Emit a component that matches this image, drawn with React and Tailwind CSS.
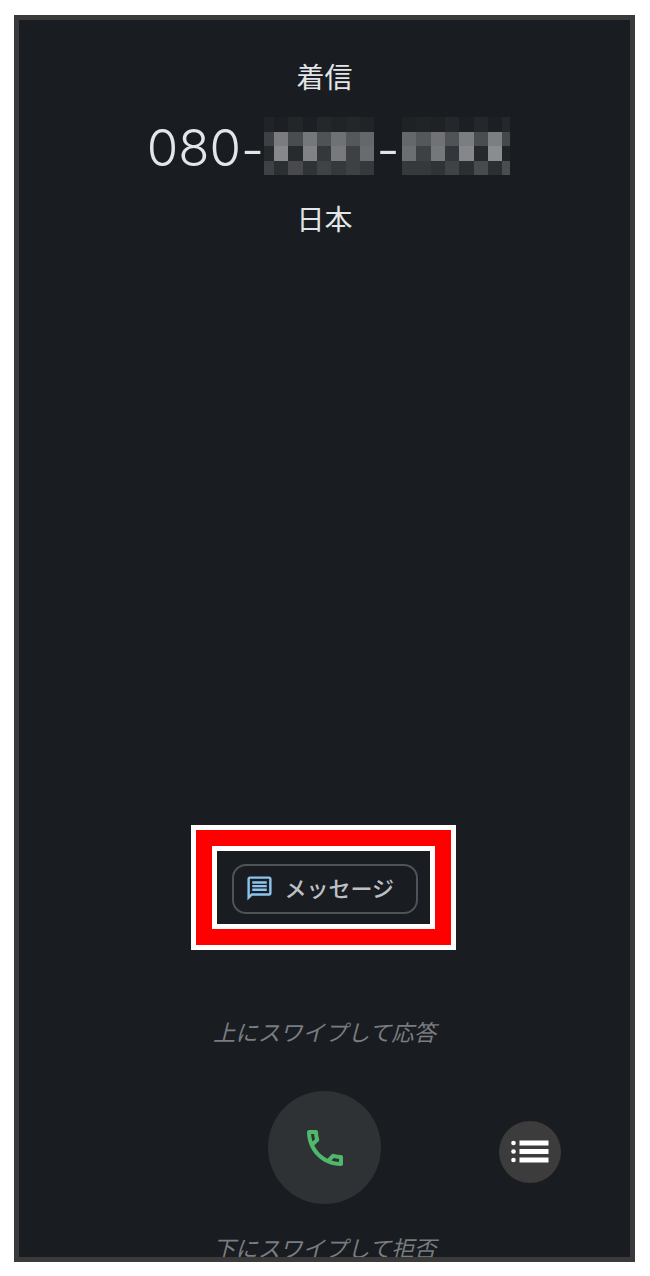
import React from 'react';

const jp = 'font-["Noto_Sans_CJK_JP",sans-serif]';

// mosaic over the masked digits, one row per line
const blockA = [
    ['bg-[#202327]', 'bg-[#1c1f23]', 'bg-[#232629]', 'bg-[#1c1f23]', 'bg-[#25282b]', 'bg-[#212427]', 'bg-[#24272a]', 'bg-[#212427]'],
    ['bg-[#3e4144]', 'bg-[#7a7c7f]', 'bg-[#4a4d50]', 'bg-[#75787b]', 'bg-[#505356]', 'bg-[#6f7275]', 'bg-[#55585b]', 'bg-[#65686b]'],
    ['bg-[#26292c]', 'bg-[#86888b]', 'bg-[#282b2e]', 'bg-[#808285]', 'bg-[#35383b]', 'bg-[#77797c]', 'bg-[#3e4144]', 'bg-[#696c6f]'],
    ['bg-[#3f4245]', 'bg-[#2c2f32]', 'bg-[#47494c]', 'bg-[#303336]', 'bg-[#404346]', 'bg-[#36393c]', 'bg-[#3e4144]', 'bg-[#36393c]'],
];

const blockB = [
    ['bg-[#1f2225]', 'bg-[#212427]', 'bg-[#1f2225]', 'bg-[#25282b]', 'bg-[#1c1f23]', 'bg-[#25282b]', 'bg-[#1c1f23]', 'bg-[#25282b]'],
    ['bg-[#65686b]', 'bg-[#55585b]', 'bg-[#707275]', 'bg-[#505356]', 'bg-[#7b7d80]', 'bg-[#4a4d50]', 'bg-[#7c7e81]', 'bg-[#45484b]'],
    ['bg-[#6c6f72]', 'bg-[#3e4144]', 'bg-[#75787b]', 'bg-[#33363a]', 'bg-[#85878a]', 'bg-[#26292c]', 'bg-[#8a8c8f]', 'bg-[#212427]'],
    ['bg-[#36393c]', 'bg-[#36393c]', 'bg-[#303336]', 'bg-[#404346]', 'bg-[#2c2f32]', 'bg-[#484b4e]', 'bg-[#2c2f32]', 'bg-[#4a4d50]'],
];

function Mosaic({ rows, columns }) {
    return (
        <div className={`grid ${columns} grid-rows-[repeat(4,14.5px)]`}>
            {rows.flat().map((color, i) => (
                <div key={i} className={color} />
            ))}
        </div>
    );
}

function MessageIcon() {
    return (
        <svg className="w-[29px] h-[29px] shrink-0" viewBox="0 0 24 24" fill="#8cc4ee">
            <path d="M20 2H4c-1.1 0-2 .9-2 2v18l4-4h14c1.1 0 2-.9 2-2V4c0-1.1-.9-2-2-2zm0 14H5.17L4 17.17V4h16v12z" />
            <path d="M6 12h12v2H6zm0-3h12v2H6zm0-3h12v2H6z" />
        </svg>
    );
}

function PhoneIcon() {
    return (
        <svg className="w-12 h-12" viewBox="0 0 24 24" fill="#4fb86b">
            <path d="M6.54 5c.06.89.21 1.76.45 2.59l-1.2 1.2c-.41-1.2-.67-2.47-.76-3.79h1.51m9.86 12.02c.85.24 1.72.39 2.6.45v1.49c-1.32-.09-2.59-.35-3.8-.75l1.2-1.19M7.5 3H4c-.55 0-1 .45-1 1 0 9.39 7.61 17 17 17 .55 0 1-.45 1-1v-3.49c0-.55-.45-1-1-1-1.24 0-2.45-.2-3.57-.57-.1-.04-.21-.05-.31-.05-.26 0-.51.1-.71.29l-2.2 2.2c-2.83-1.45-5.15-3.76-6.59-6.59l2.2-2.2c.28-.28.36-.67.25-1.02C8.7 6.45 8.5 5.25 8.5 4c0-.55-.45-1-1-1z" />
        </svg>
    );
}

function ListIcon() {
    return (
        <svg className="w-[38px] h-[24px]" viewBox="0 0 38 24" fill="#fff">
            <circle cx="2.5" cy="3" r="2.3" />
            <circle cx="2.5" cy="11.5" r="2.3" />
            <circle cx="2.5" cy="20" r="2.3" />
            <rect x="8.5" y="0.5" width="29" height="5" />
            <rect x="8.5" y="9" width="29" height="5" />
            <rect x="8.5" y="17.5" width="29" height="5" />
        </svg>
    );
}

export default function App() {
    return (
        <div className={`w-[650px] h-[1276px] bg-white pt-[15px] pl-[14px] ${jp}`}>
            <div className="w-[621px] h-[1247px] border-[5px] border-[#3a3a3a] bg-[#191c20] overflow-hidden flex flex-col items-center">
                <div className="shrink-0 mt-[36px] text-[28px] leading-[40px] text-[#e3e5e8]">着信</div>

                <div className="shrink-0 mt-[21px] ml-[8px] h-[58px] flex items-center font-['Inter',sans-serif] font-light text-[51px] leading-none text-[#e3e5e8]">
                    <span className="pt-[2px]">080</span>
                    <span className="pt-[6px]">-</span>
                    <Mosaic rows={blockA} columns="grid-cols-[10px_repeat(7,14.3px)]" />
                    <span className="mx-[2.5px] pt-[6px]">-</span>
                    <Mosaic rows={blockB} columns="grid-cols-[repeat(7,14.3px)_8px]" />
                </div>

                <div className="shrink-0 mt-[23px] text-[28px] leading-[40px] text-[#e3e5e8]">日本</div>

                <div className="shrink-0 mt-[587px] -ml-[2px] w-[265px] h-[125px] border-[5px] border-white">
                    <div className="w-full h-full border-[16px] border-[#ff0000]">
                        <div className="w-full h-full border-[5px] border-white bg-[#191c20] flex items-center justify-center pl-[2px] pt-[2px]">
                            <div className="w-[186px] h-[50px] rounded-[14px] border-2 border-[#4f5358] flex items-center pl-[11px] gap-[11px]">
                                <MessageIcon />
                                <span className="pb-[3px] text-[22px] leading-none font-medium text-[#bdc1c6]">メッセージ</span>
                            </div>
                        </div>
                    </div>
                </div>

                <div className="shrink-0 mt-[63px] text-[22.4px] leading-[36px] italic text-[#7a7d80]">上にスワイプして応答</div>

                <div className="shrink-0 mt-[42px] w-full grid grid-cols-[1fr_auto_1fr]">
                    <div />
                    <div className="w-[113px] h-[113px] rounded-full bg-[#2e3235] flex items-center justify-center">
                        <PhoneIcon />
                    </div>
                    <div className="pl-[118px] pt-[30px]">
                        <div className="w-[62px] h-[62px] rounded-full bg-[#3c3c3c] flex items-center justify-center">
                            <ListIcon />
                        </div>
                    </div>
                </div>

                <div className="shrink-0 mt-[25px] text-[22.4px] leading-[36px] italic text-[#7a7d80]">下にスワイプして拒否</div>
            </div>
        </div>
    );
}
